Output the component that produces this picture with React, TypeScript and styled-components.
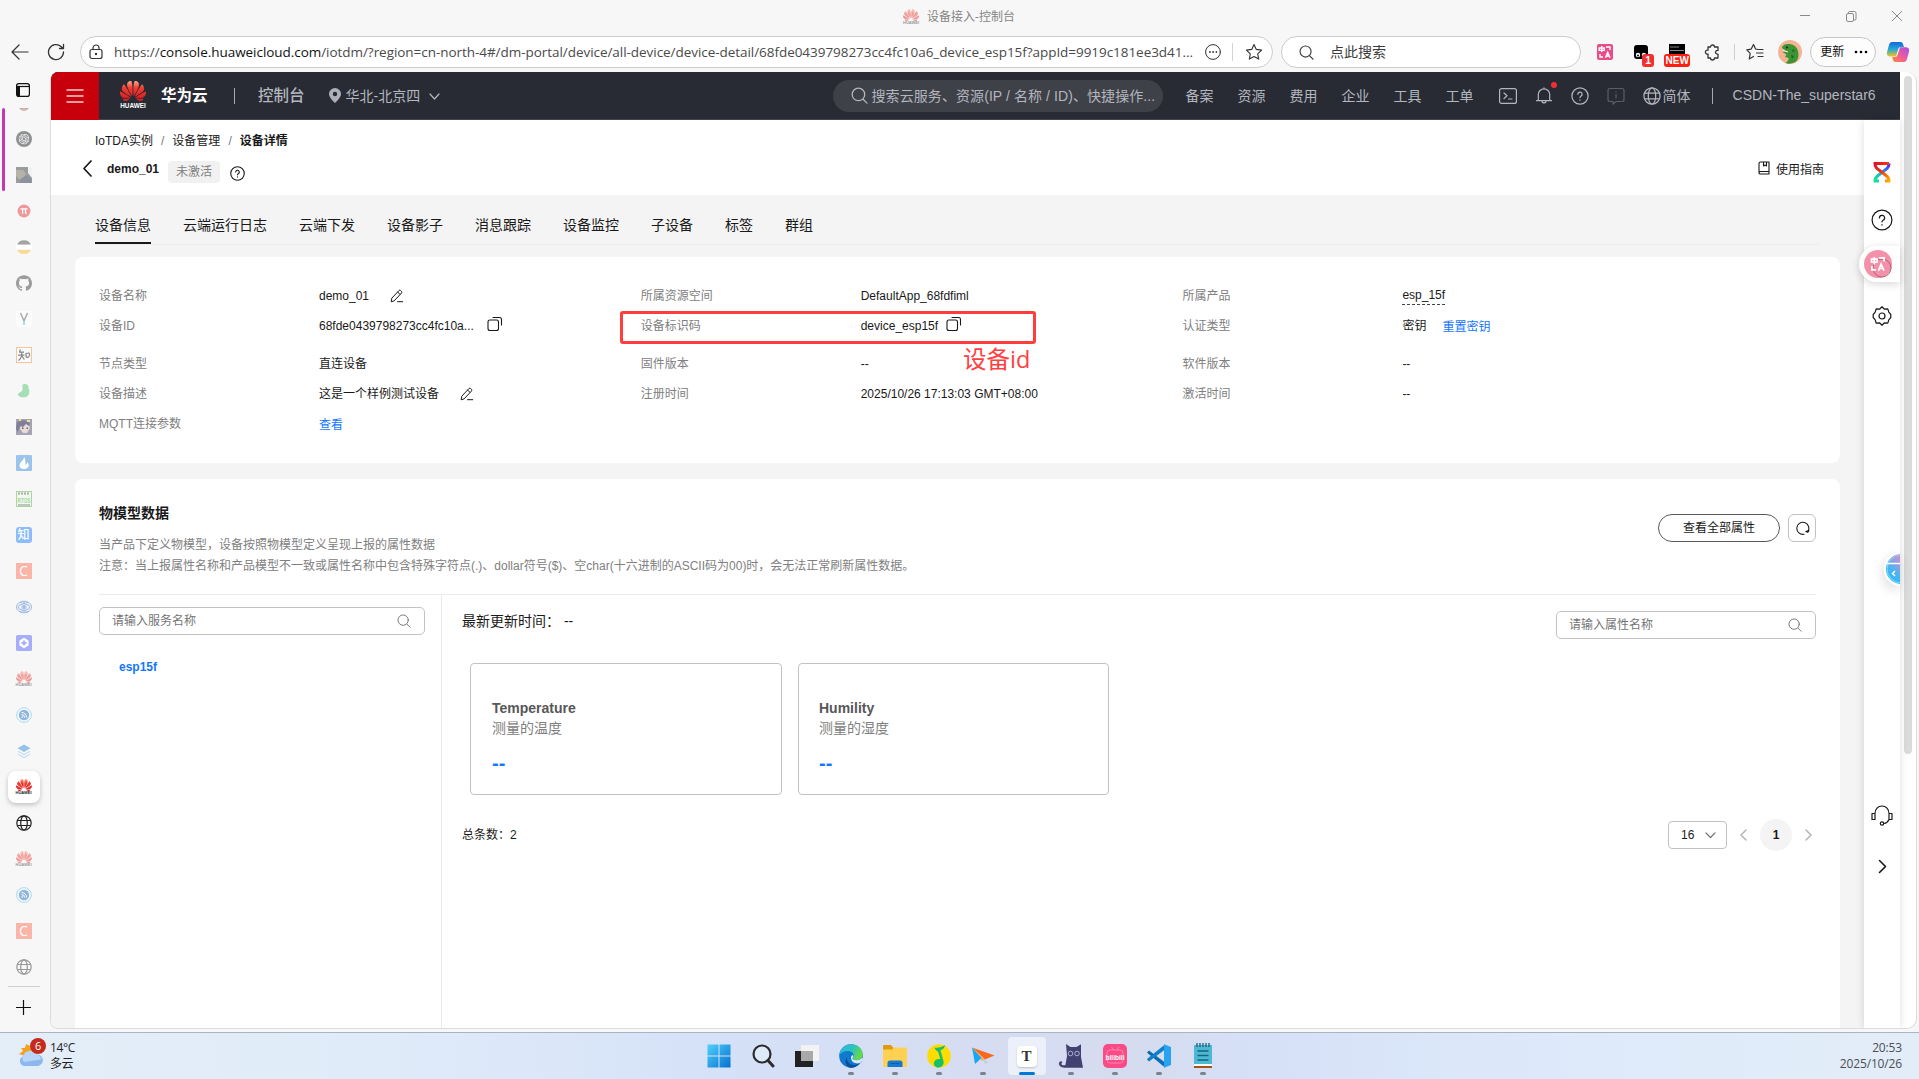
import React from 'react';
import styled, { createGlobalStyle } from 'styled-components';
import { SiHuawei, SiGithub, SiOpenai } from 'react-icons/si';

const web = '"Liberation Sans", Arial, "Noto Sans CJK SC", sans-serif';
const ui = '"Open Sans", "Noto Sans", "Noto Sans CJK SC", sans-serif';

const Global = createGlobalStyle`
  *, *::before, *::after { box-sizing: border-box; }
  html, body { margin: 0; padding: 0; overflow: hidden; background: #f7f7f7; }
  svg { display: block; flex: none; }
`;

/* ---------- window ---------- */

const Window = styled.div`
  display: flex;
  flex-direction: column;
  width: 1919px;
  height: 1079px;
  background: #f7f7f7;
  font-family: ${ui};
  font-size: 12px;
  color: #191919;
  white-space: nowrap;
`;

const TitleBar = styled.div`
  display: grid;
  grid-template-columns: 1fr auto 1fr;
  align-items: center;
  height: 32px;
  color: #868686;
`;

const TitleText = styled.div`
  grid-column: 2;
  display: flex;
  align-items: center;
  gap: 8px;
  margin-right: 1px;
  padding-top: 1px;
  line-height: 18px;
`;

const WindowControls = styled.div`
  display: flex;
  justify-content: flex-end;
  gap: 30px;
  padding-right: 14px;
`;

const Toolbar = styled.div`
  display: flex;
  align-items: center;
  height: 40px;
  color: #333;
`;

const ToolIcon = styled.span<{ $w: number }>`
  display: flex;
  justify-content: center;
  align-items: center;
  flex: none;
  width: ${(p) => p.$w}px;
  height: 32px;
`;

const AddressBar = styled.div`
  display: flex;
  align-items: center;
  width: 1193px;
  height: 32px;
  border: 1px solid #cdcdcd;
  border-radius: 16px;
  background: #fff;
  padding: 0 0 0 7px;
`;

const Url = styled.div`
  flex: none;
  width: 1082px;
  margin-left: 10px;
  font-size: 13.5px;
  letter-spacing: -0.048px;
  line-height: 20px;
  color: #4a4a4a;
  b { font-weight: 400; color: #111; }
`;

const VLine = styled.span<{ $h: number; $c: string }>`
  width: 1px;
  height: ${(p) => p.$h}px;
  background: ${(p) => p.$c};
  flex: none;
`;

const QuickSearch = styled.div`
  display: flex;
  align-items: center;
  gap: 16px;
  width: 301px;
  height: 32px;
  margin: 0 9px 0 8px;
  padding-left: 17px;
  border: 1px solid #cdcdcd;
  border-radius: 16px;
  background: #fff;
  font-size: 14px;
  line-height: 20px;
  color: #3b3b3b;
`;

const BadgeHost = styled.span`
  position: relative;
  display: flex;
  width: 16px;
  height: 16px;
`;

const Badge = styled.span<{ $wide?: boolean }>`
  position: absolute;
  top: 10px;
  left: ${(p) => (p.$wide ? -5 : 9)}px;
  width: ${(p) => (p.$wide ? 26 : 12)}px;
  height: 13px;
  border-radius: 3px;
  background: ${(p) => (p.$wide ? '#ff1e0f' : '#f23030')};
  color: #fff;
  font: bold ${(p) => (p.$wide ? 10 : 10.5)}px/13px ${web};
  text-align: center;
`;

const UpdatePill = styled.div`
  display: flex;
  align-items: center;
  gap: 10px;
  width: 66px;
  height: 30px;
  padding-left: 9px;
  border: 1px solid #c6c6c6;
  border-radius: 15px;
  background: #fdfdfd;
  color: #111;
  line-height: 18px;
`;

const Main = styled.div`
  display: flex;
  flex: none;
  height: 960px;
`;

/* ---------- vertical tabs ---------- */

const TabRail = styled.div`
  display: flex;
  flex-direction: column;
  align-items: center;
  width: 50px;
  padding-right: 3px;
`;

const TabToggle = styled.div`
  display: flex;
  align-items: center;
  height: 36px;
  padding-right: 1px;
`;

const TabList = styled.div`
  position: relative;
  display: flex;
  flex: none;
  flex-direction: column;
  align-items: center;
  width: 47px;
  height: 924px;
`;

const GroupMark = styled.div`
  position: absolute;
  left: 2px;
  top: 0;
  width: 3px;
  height: 83px;
  border-radius: 2px;
  background: #c239b3;
`;

const CutTab = styled.div`
  flex: none;
  height: 13px;
`;

const TabCell = styled.div`
  display: flex;
  flex: none;
  align-items: center;
  justify-content: center;
  width: 32px;
  height: 36px;
`;

const TabStack = styled.div`
  display: flex;
  flex: none;
  flex-direction: column;
  padding-top: 0;
`;

const ActiveTile = styled.div`
  display: flex;
  flex: none;
  align-items: center;
  justify-content: center;
  width: 32px;
  height: 32px;
  border-radius: 8px;
  background: #fff;
  box-shadow: 0 2px 5px rgba(0, 0, 0, 0.22);
`;

const LetterTile = styled.div<{ $bg: string; $fg?: string; $line?: string; $size?: number; $r?: number }>`
  width: 16px;
  height: 16px;
  border-radius: ${(p) => p.$r ?? 0}px;
  border: ${(p) => (p.$line ? `1px solid ${p.$line}` : '0')};
  background: ${(p) => p.$bg};
  color: ${(p) => p.$fg ?? '#fff'};
  font: 500 ${(p) => p.$size ?? 14}px/${(p) => (p.$line ? 14 : 16)}px "Open Sans", "Noto Sans CJK SC", sans-serif;
  text-align: center;
`;

const LogoStack = styled.span<{ $faded?: boolean }>`
  display: flex;
  flex-direction: column;
  align-items: center;
  width: 16px;
  opacity: ${(p) => (p.$faded ? 0.45 : 1)};
  svg { fill: url(#petal); }
  small {
    width: 16px;
    height: 4px;
    font: bold 4px/4px ${web};
    text-align: center;
    color: #222;
  }
`;

const RailDivider = styled.div`
  flex: none;
  width: 32px;
  height: 1px;
  margin-top: 1px;
  background: #cfcfcf;
`;

const NewTab = styled.div`
  flex: none;
  margin-top: 13px;
`;

/* ---------- page frame ---------- */

const Panel = styled.div`
  display: flex;
  width: 1867px;
  height: 957px;
  border: 1px solid #dcdcdc;
  border-top: 0;
  border-radius: 8px 10px 10px 8px;
  background: #fff;
  overflow: hidden;
`;

const Page = styled.div`
  display: flex;
  flex-direction: column;
  width: 1849px;
  font-family: ${web};
`;

const ScrollTrack = styled.div`
  flex: 1;
  padding: 4px 4px 0 4px;
`;

const ScrollThumb = styled.div`
  width: 8px;
  height: 678px;
  border-radius: 4px;
  background: #dbdbdb;
`;

const CloudHeader = styled.div`
  display: flex;
  flex: none;
  align-items: center;
  height: 48px;
  background: #282b33;
  border-bottom: 1px solid #43454c;
  font-size: 14px;
  line-height: 20px;
  color: #b3b6be;
`;

const MenuButton = styled.div`
  display: flex;
  align-items: center;
  justify-content: center;
  width: 48px;
  height: 48px;
  background: #c7000b;
`;

const BrandLogo = styled.div`
  display: flex;
  flex-direction: column;
  align-items: center;
  gap: 1px;
  width: 28px;
  margin-left: 20px;
  svg { fill: url(#petal); }
  span { font: bold 6.4px/8px ${web}; color: #fff; }
`;

const BrandName = styled.b`
  width: 48px;
  margin: 0 25px 0 14px;
  font-size: 15.5px;
  color: #fff;
`;

const ConsoleName = styled.span`
  margin: 0 24px 0 23px;
  font-size: 15.5px;
  font-weight: 500;
`;

const Region = styled.div`
  display: flex;
  align-items: center;
  gap: 5px;
  width: 504px;
  > svg:last-child { margin: 2px 0 0 4px; }
`;

const CloudSearch = styled.div`
  display: flex;
  align-items: center;
  gap: 4px;
  width: 330px;
  height: 32px;
  padding-left: 18px;
  border-radius: 16px;
  background: #3f4148;
  letter-spacing: 0.08px;
`;

const CloudNav = styled.nav`
  display: flex;
  gap: 24px;
  margin: 0 25px 0 23px;
`;

const CloudTools = styled.div`
  display: flex;
  align-items: center;
  gap: 18px;
`;

const BellDot = styled.span`
  position: absolute;
  top: -5px;
  right: -4px;
  width: 6px;
  height: 6px;
  border-radius: 50%;
  background: #f23030;
`;

const BellHost = styled.span`
  position: relative;
`;

const Language = styled.div`
  display: flex;
  align-items: center;
  gap: 2px;
  margin-right: 21px;
`;

const Account = styled.span`
  margin: 0 0 2px 20px;
  letter-spacing: 0.04px;
`;

const Body = styled.div`
  display: flex;
  flex: 1;
  min-height: 0;
`;

const Content = styled.div`
  display: flex;
  flex-direction: column;
  width: 1813px;
  background: #f4f4f4;
`;

const PageHead = styled.div`
  flex: none;
  height: 75px;
  padding: 12px 40px 0 26px;
  background: #fff;
`;

const Crumbs = styled.div`
  display: flex;
  gap: 8px;
  padding-left: 18px;
  line-height: 18px;
  i { font-style: normal; color: #777; }
`;

const TitleRow = styled.div`
  display: flex;
  align-items: flex-start;
  height: 36px;
  padding-top: 7px;
  > svg { margin: 3px 0 0 4.5px; }
  > b { margin: 3px 9px 0 15.5px; line-height: 18px; font-size: 12px; }
`;

const StatusTag = styled.span`
  width: 52px;
  height: 22px;
  margin: 4px 7px 0 0;
  border-radius: 4px;
  background: #f1f1f1;
  color: #808080;
  line-height: 22px;
  text-align: center;
`;

const Guide = styled.div`
  display: flex;
  align-items: center;
  gap: 6px;
  height: 18px;
  margin: 2px 0 0 auto;
`;

const HelpMark = styled.div`
  padding: 9px 0 0 3px;
`;

const Tabs = styled.div`
  display: flex;
  flex: none;
  gap: 32px;
  height: 50px;
  margin: 0 44px 12px 44px;
  border-bottom: 1px solid #ededed;
`;

const Tab = styled.div<{ $on?: boolean }>`
  height: 49px;
  padding-top: 19px;
  border-bottom: ${(p) => (p.$on ? '2px solid #191919' : '0')};
  font-size: 14px;
  line-height: 22px;
`;

const Card = styled.section<{ $grow?: boolean }>`
  position: relative;
  flex: ${(p) => (p.$grow ? '1' : 'none')};
  display: flex;
  flex-direction: ${(p) => (p.$grow ? 'column' : 'row')};
  width: 1765px;
  height: ${(p) => (p.$grow ? 'auto' : '206px')};
  margin: 0 0 ${(p) => (p.$grow ? 0 : 16)}px 24px;
  padding: 24px 24px 0 24px;
  border-radius: ${(p) => (p.$grow ? '8px 8px 0 0' : '8px')};
  background: #fff;
`;

const InfoColumn = styled.div`
  width: 541.7px;
`;

const InfoRow = styled.div<{ $tail?: boolean }>`
  display: grid;
  grid-template-columns: 220px 1fr;
  align-items: center;
  height: 30px;
  margin-bottom: ${(p) => (p.$tail ? 8 : 0)}px;
  line-height: 18px;
`;

const Label = styled.span`
  color: #808080;
`;

const Value = styled.span<{ $gap?: number }>`
  display: flex;
  align-items: center;
  gap: ${(p) => p.$gap ?? 0}px;
`;

const CopySlot = styled.span`
  margin-bottom: 4px;
`;

const Link = styled.a`
  color: #1476ff;
  padding-top: 1px;
`;

const DashedLink = styled.span`
  height: 18px;
  line-height: 17px;
  border-bottom: 1px dashed #444;
  margin-top: -1px;
`;

const RedFrame = styled.div`
  position: absolute;
  left: 545px;
  top: 54px;
  width: 416px;
  height: 33px;
  border: 3px solid #ff3d3d;
  border-radius: 3px;
`;

const RedNote = styled.div`
  position: absolute;
  left: 888px;
  top: 86px;
  font: 23.5px/32px ${ui};
  color: #ff4040;
`;

const ModelHead = styled.div`
  display: flex;
  justify-content: space-between;
  flex: none;
  height: 92px;
  border-bottom: 1px solid #ebebeb;
`;

const ModelText = styled.div`
  line-height: 21px;
  color: #808080;
  h3 { margin: 0 0 12px; font-size: 14px; line-height: 20px; color: #191919; }
  p { margin: 0; }
`;

const ModelActions = styled.div`
  display: flex;
  gap: 8px;
  padding-top: 11px;
`;

const OutlineButton = styled.div`
  width: 122px;
  height: 28px;
  border: 1px solid #595959;
  border-radius: 14px;
  line-height: 26px;
  text-align: center;
`;

const SquareButton = styled.div`
  display: flex;
  align-items: center;
  justify-content: center;
  width: 28px;
  height: 28px;
  border: 1px solid #c2c2c2;
  border-radius: 6px;
`;

const ModelBody = styled.div`
  display: flex;
  flex: 1;
`;

const ServicePane = styled.div`
  width: 343px;
  padding: 12px 16px 0 0;
  border-right: 1px solid #ebebeb;
`;

const SearchField = styled.div<{ $w: number }>`
  display: flex;
  align-items: center;
  justify-content: space-between;
  width: ${(p) => p.$w}px;
  height: 28px;
  padding: 0 13px 0 12px;
  border: 1px solid #c2c2c2;
  border-radius: 5px;
  font-size: 12px;
  line-height: 26px;
  color: #757575;
`;

const ServiceName = styled.div`
  margin: 23px 0 0 20px;
  line-height: 18px;
  font-weight: bold;
  color: #1476ff;
`;

const PropertyPane = styled.div`
  flex: 1;
  padding: 16px 0 0 20px;
`;

const PropertyBar = styled.div`
  display: flex;
  justify-content: space-between;
  align-items: flex-start;
  height: 52px;
  font-size: 14px;
  line-height: 22px;
  > span { margin-top: -1px; }
`;

const PropertyGrid = styled.div`
  display: flex;
  gap: 16px;
  padding-left: 8px;
`;

const PropertyCard = styled.div<{ $w: number; $pad: number }>`
  width: ${(p) => p.$w}px;
  height: 132px;
  padding: 34px 0 0 ${(p) => p.$pad}px;
  border: 1px solid #c2c2c2;
  border-radius: 4px;
  font-size: 14px;
  line-height: 20px;
  color: #808080;
  b { display: block; color: #575757; }
  strong { display: block; margin-top: 15px; font-size: 20px; color: #1476ff; }
`;

const Pager = styled.div`
  display: flex;
  align-items: center;
  height: 32px;
  margin-top: 24px;
  > span { margin-top: -3px; }
`;

const PagerControls = styled.div`
  display: flex;
  align-items: center;
  margin-left: auto;
  padding-right: 4px;
  gap: 13px;
`;

const PageSize = styled.div`
  display: flex;
  align-items: center;
  justify-content: space-between;
  width: 59px;
  height: 28px;
  padding: 0 10px 0 12px;
  border: 1px solid #c2c2c2;
  border-radius: 4px;
`;

const PageNumber = styled.b`
  width: 32px;
  height: 32px;
  border-radius: 50%;
  background: #f4f4f4;
  line-height: 32px;
  text-align: center;
`;

/* ---------- right rail ---------- */

const HelpRail = styled.aside`
  position: relative;
  display: flex;
  flex-direction: column;
  align-items: center;
  width: 36px;
  padding-top: 41px;
  background: #fff;
  box-shadow: 0 0 8px rgba(0, 0, 0, 0.14);
`;

const TranslateFloat = styled.div`
  position: absolute;
  left: -5px;
  top: 126px;
  display: flex;
  align-items: center;
  width: 41px;
  height: 36px;
  padding-left: 5px;
  border-radius: 18px 0 0 18px;
  background: #fff;
  box-shadow: 0 2px 8px rgba(0, 0, 0, 0.16);
`;

const RobotFloat = styled.div`
  position: absolute;
  right: 0;
  top: 432px;
  width: 16px;
  height: 34px;
  border-radius: 17px 0 0 17px;
  box-shadow: -1px 4px 12px rgba(0, 0, 0, 0.14);
  overflow: hidden;
`;

const RailIcon = styled.div<{ $mt: number }>`
  margin-top: ${(p) => p.$mt}px;
`;

/* ---------- taskbar ---------- */

const Taskbar = styled.footer`
  display: grid;
  grid-template-columns: 1fr auto 1fr;
  height: 47px;
  border-top: 1px solid #a9b3c4;
  background: linear-gradient(90deg, #e3eef8 0%, #e0ebf9 20%, #d5e1f8 38%, #d6ddf2 50%, #d5dcf0 60%, #d6e1f8 66%, #deeafa 82%, #e2edf8 100%);
`;

const Weather = styled.div`
  display: flex;
  gap: 7px;
  padding: 7px 0 0 19px;
  line-height: 16px;
  letter-spacing: -0.4px;
  color: #222;
`;

const WeatherIcon = styled.span`
  position: relative;
  width: 24px;
  height: 30px;
`;

const WeatherBadge = styled.span`
  position: absolute;
  left: 11px;
  top: -2px;
  width: 16px;
  height: 16px;
  border-radius: 50%;
  background: #c42b1c;
  color: #fff;
  font-size: 11px;
  line-height: 16px;
  text-align: center;
`;

const Apps = styled.div`
  display: flex;
  gap: 6px;
  padding: 4px 0 0 2px;
`;

const TaskApp = styled.div<{ $on?: boolean }>`
  display: flex;
  flex-direction: column;
  align-items: center;
  justify-content: flex-end;
  width: 38px;
  height: 38px;
  border-radius: 4px;
  background: ${(p) => (p.$on ? 'rgba(255,255,255,0.55)' : 'transparent')};
`;

const AppMark = styled.span<{ $state: 'none' | 'open' | 'on' }>`
  width: ${(p) => (p.$state === 'on' ? 16 : 6)}px;
  height: 3px;
  margin-top: 4px;
  border-radius: 2px;
  background: ${(p) => (p.$state === 'on' ? '#0078d4' : p.$state === 'open' ? '#7c828e' : 'transparent')};
`;

const TyporaTile = styled.span`
  width: 20px;
  height: 21px;
  margin-bottom: 1px;
  border-radius: 4px;
  background: #fff;
  box-shadow: 0 1px 2px rgba(0, 0, 0, 0.2);
  font: bold 15px/21px "Liberation Serif", serif;
  color: #333;
  text-align: center;
`;

const Clock = styled.div`
  padding: 7px 17px 0 0;
  line-height: 16px;
  text-align: right;
  color: #4b4f55;
  letter-spacing: -0.15px;
`;

/* ---------- icons ---------- */

const stroke = (w = 1.2) => ({ fill: 'none', stroke: 'currentColor', strokeWidth: w, strokeLinecap: 'round' as const, strokeLinejoin: 'round' as const });

const Magnifier = ({ s = 16, c = 'currentColor', w = 1.2 }) => (
  <svg width={s} height={s} viewBox="0 0 16 16" fill="none" stroke={c} strokeWidth={w} strokeLinecap="round">
    <circle cx="7" cy="7" r="5.9" />
    <path d="M11.4 11.6 15 15.2" />
  </svg>
);

const HelpIcon = ({ s = 16, w = 1.2 }) => (
  <svg width={s} height={s} viewBox="0 0 16 16" {...stroke(w)}>
    <circle cx="8" cy="8" r="7.2" />
    <path d="M6.1 6.5a1.9 1.9 0 1 1 2.7 1.7c-.6.3-.8.6-.8 1.2" />
    <path d="M8 11.4v.3" />
  </svg>
);

const Globe = ({ s = 16, w = 1.2, c = 'currentColor' }) => (
  <svg width={s} height={s} viewBox="0 0 16 16" fill="none" stroke={c} strokeWidth={w}>
    <circle cx="8" cy="8" r="7.2" />
    <ellipse cx="8" cy="8" rx="3.3" ry="7.2" />
    <path d="M1.3 5.5h13.4M1.3 10.5h13.4" />
  </svg>
);

const EditIcon = () => (
  <svg width="14" height="14" viewBox="0 0 14 14" {...stroke(1)}>
    <path d="M1.2 12.4 1.8 9.2 9 1.5q.8-.8 1.6 0l.9.9q.8.8 0 1.6L4.4 11.6Z" />
    <path d="M7.6 3 10 5.4M7.5 12.7h5.2" />
  </svg>
);

const CopyIcon = () => (
  <CopySlot>
    <svg width="16" height="16" viewBox="0 0 16 16" {...stroke(1.1)}>
      <rect x="1" y="4" width="10.5" height="10.5" rx="2" />
      <path d="M6 1.500h6.500a2 2 0 0 1 2 2v5.500" />
    </svg>
  </CopySlot>
);

const Chevron = ({ d, w = 10, h = 6, sw = 1.2, c = 'currentColor' }: { d: string; w?: number; h?: number; sw?: number; c?: string }) => (
  <svg width={w} height={h} viewBox={`0 0 ${w} ${h}`} fill="none" stroke={c} strokeWidth={sw} strokeLinecap="round" strokeLinejoin="round">
    <path d={d} />
  </svg>
);

const HuaweiPetals = ({ w, h }: { w: number; h: number }) => (
  <SiHuawei viewBox="0 3.2 24 17.6" preserveAspectRatio="none" width={w} height={h} style={{ width: w, height: h }} />
);

const HuaweiMark = ({ faded }: { faded?: boolean }) => (
  <LogoStack $faded={faded}>
    <HuaweiPetals w={16} h={12} />
    <small>HUAWEI</small>
  </LogoStack>
);

const TranslateGlyph = ({ s }: { s: number }) => (
  <svg width={s} height={s} viewBox="0 0 16 16" fill="none" stroke="#fff" strokeWidth="1.5">
    <path d="M2.2 3.6h5v2.6h-5zM4.7 1.8v6.6M9 2.6h4.4v3.2M2.6 9.8v3.4h3.6M8.4 14l2.4-6 2.5 6M9.2 12h3.2" />
  </svg>
);

const Rss = () => (
  <svg width="16" height="16" viewBox="0 0 16 16">
    <circle cx="8" cy="8" r="7.4" fill="none" stroke="#a6dcf5" />
    <circle cx="8" cy="8" r="5.2" fill="#8fb6df" />
    <g fill="none" stroke="#fff" strokeWidth="1"><path d="M5.6 7.6a3 3 0 0 1 3 3M5.6 5.5a5 5 0 0 1 5 5" /></g>
    <circle cx="6.2" cy="10" r=".8" fill="#fff" />
  </svg>
);

const sideTabs: React.ReactNode[] = [
  <SiOpenai size={16} color="#fff" style={{ background: '#8f9193', borderRadius: 8, padding: 2.5 }} />,
  <svg width="16" height="16" viewBox="0 0 16 16"><path fill="#9b9ca0" d="M0 0h16v16H0z" /><path fill="#b5b3a6" d="M0 3h7l3 4-2 5H3L0 9z" /><path fill="#8d929c" d="M5 12l5-4 5 4 1 4H4z" /><path fill="#f2f2f2" d="M12 0h4v11l-4-5z" /></svg>,
  <svg width="14" height="14" viewBox="0 0 14 14"><circle cx="7" cy="7" r="6.5" fill="#f0999b" /><path d="M3.5 4.8h7M5.6 5v4.8M8.5 5v3.6q0 1 1.2 1" fill="none" stroke="#fff" strokeWidth="1.3" /></svg>,
  <svg width="16" height="16" viewBox="0 0 16 16"><path fill="#a3a3a3" d="M1.3 5.5a7 6 0 0 1 13.4 0z" /><path fill="#fff" d="M0 6h16v4H0z" /><path fill="#fbd992" d="M1.3 11a7 5.5 0 0 0 13.4 0z" /></svg>,
  <SiGithub size={16} color="#9b9b9b" />,
  <svg width="16" height="16" viewBox="0 0 16 16"><path fill="#fbfbfb" d="M0 0h16v16H0z" /><path d="M4.5 2 8 10l3.5-8" fill="none" stroke="#aaa" strokeWidth="1.5" /><path d="M8 10.5v3.5" stroke="#a5dcef" strokeWidth="2" /></svg>,
  <svg width="16" height="16" viewBox="0 0 16 16" fill="none"><rect x=".5" y=".5" width="15" height="15" fill="#fafafa" stroke="#f7c49e" /><path d="M4.5 2.500 3.500 5M3 5.200h5M2 8.200h6.500M5.700 5v3.500Q5 12 2.500 13.500M6 9l2.300 3.500M10 6.500q4-1.500 3.500 1.500c-.3 2.500-2.800 3.200-3.400 1.500z" stroke="#868686" strokeWidth="1.2" /></svg>,
  <svg width="16" height="16" viewBox="0 0 16 16"><path fill="#a5e0b4" d="M7 1.500c3-1.200 6 .5 5.500 3.500C14.500 9 13 14 8.500 14.300 5 14.500 2 13.500 2 11.500 2 9.500 5.500 9.500 6.500 7 7.200 5 5.500 2.500 7 1.500z" /></svg>,
  <svg width="16" height="16" viewBox="0 0 16 16"><path fill="#a4a4b2" d="M0 0h16v16H0z" /><path fill="#eadbd8" d="M5 5l7 0 2 4-3 5H7L4 10z" /><path fill="#7f7f98" d="M1 3l7-2 6 3-1 3-3-2-3 3-3-1-2 6-2-3z" /><path fill="#f3d9a8" d="M3 0h2v2H3zM11 1h3v2h-3z" /><path fill="#666" d="M6 8.500h1.500V10H6zM10.500 8.500H12V10h-1.500z" /></svg>,
  <svg width="16" height="16" viewBox="0 0 16 16"><rect width="16" height="16" rx="1" fill="#9cc3ec" /><path d="M8 2c.5 3-4.500 5-4.500 8.500C3.500 13 6 14 8 14s4.800-1 4.800-3.700c0-1.600-1-2.300-1.200-3.300-.6 1.500-1.200 2.500-2.200 3C9.500 8 9.800 4 8 2z" fill="#fff" /></svg>,
  <svg width="16" height="16" viewBox="0 0 16 16"><rect x=".5" y=".5" width="15" height="15" fill="#f1f9ee" stroke="#aad6a2" /><path d="M2 2.500h12" stroke="#a9a9a9" strokeWidth="2" strokeDasharray="2 1" /><path d="M2 14h12" stroke="#b5b5b5" strokeWidth="1.6" /><text x="8" y="11.6" textAnchor="middle" fontFamily="Liberation Sans, sans-serif" fontWeight="bold" fontSize="8" textLength="13" lengthAdjust="spacingAndGlyphs" fill="#a3d69a">RTOS</text></svg>,
  <LetterTile $bg="#8bbcfb" $size={12} $r={3}>知</LetterTile>,
  <LetterTile $bg="#fbb4a8" $size={14}>C</LetterTile>,
  <svg width="16" height="16" viewBox="0 0 16 16" fill="none" stroke="#9db8e6" strokeWidth="1"><ellipse cx="8" cy="8" rx="7.5" ry="5.8" /><rect x="2.5" y="5.5" width="5" height="5" rx="2.5" /><rect x="8.5" y="5.5" width="5" height="5" rx="2.5" /><path d="M5 8h6M8 2.500v11M4 3.500q4 2 8 0M4 12.500q4-2 8 0" /></svg>,
  <svg width="16" height="16" viewBox="0 0 16 16"><rect width="16" height="16" rx="1.5" fill="#a8adfa" /><path d="M8 2.800 12.500 5.400v5.200L8 13.200 3.500 10.600V5.400z" fill="#fff" /><path d="M8 5.500v5M5.500 8h5" stroke="#a8adfa" strokeWidth="1.8" /></svg>,
  <HuaweiMark faded />,
  <Rss />,
  <svg width="14" height="15" viewBox="0 0 14 15"><path d="M7 .5 13.500 4.200 7 8 .5 4.200z" fill="#97c1e8" /><path d="M1 7.200 7 10.600l6-3.400M1 10.200l6 3.400 6-3.400" fill="none" stroke="#c4def2" strokeWidth="1.2" /></svg>,
  <ActiveTile><HuaweiMark /></ActiveTile>,
  <Globe c="#222" />,
  <HuaweiMark faded />,
  <Rss />,
  <LetterTile $bg="#fbb4a8" $size={14}>C</LetterTile>,
  <Globe c="#999" />,
];

const taskApps: { icon: React.ReactNode; state: 'none' | 'open' | 'on' }[] = [
  { state: 'none', icon: <svg width="24" height="24" viewBox="0 0 24 24"><defs><linearGradient id="win" x1="0" y1="0" x2="1" y2="1"><stop offset="0" stopColor="#4fd0fb" /><stop offset="1" stopColor="#0670cf" /></linearGradient></defs><path fill="url(#win)" d="M.5.5h11v11H.5zM12.500.5h11v11h-11zM.5 12.500h11v11H.5zM12.500 12.500h11v11h-11z" /></svg> },
  { state: 'none', icon: <svg width="24" height="24" viewBox="0 0 24 24" fill="none" stroke="#2b2b2b"><circle cx="11" cy="10" r="8.5" strokeWidth="2.2" fill="#dfeaf8" /><path d="m17 16.500 5 5.500" strokeWidth="3" strokeLinecap="round" /></svg> },
  { state: 'none', icon: <svg width="24" height="24" viewBox="0 0 24 24"><path fill="#222" d="M0 7h18v16H0z" /><path fill="#f3f3f3" d="M6 1h18v16H6z" /><path fill="#a9a9a9" d="M6 7h12v10H6z" /></svg> },
  { state: 'open', icon: <svg width="24" height="24" viewBox="0 0 24 24"><defs><linearGradient id="edge" x1="0" y1="0" x2="1" y2=".4"><stop offset="0" stopColor="#2bb4e9" /><stop offset=".6" stopColor="#2fc4b8" /><stop offset="1" stopColor="#66d84b" /></linearGradient></defs><circle cx="12" cy="12" r="11.8" fill="#0f78cf" /><path fill="url(#edge)" d="M.3 11C1 4.500 6 .2 12 .2c7 0 11.800 4.800 11.800 10 0 3.800-3 6-6.300 6-2.500 0-4-.8-4-1.700 0-.8 1.200-1.200 1.200-3.200 0-2.300-2.500-4.300-6-4.300-4 0-7 2-8.400 4z" /><path fill="#dce6f8" d="M13.500 14.500c0 .9 1.500 1.700 4 1.700 2 0 4-.7 5.300-2.200.9 0 1.200 0 .8 1.500-.8 1.500-1.600 2.800-2.600 3.600-3 .9-8.500.2-9-5-.1-1.500.5-2.700 1.500-3.100 1.700 1.500.2 2.500 0 3.500z" /><path fill="#0c4f97" d="M8 13c-.5 5 3.500 8.800 8.500 7.900 1.500-.3 3-.9 4.300-1.800-2 3-5.300 4.700-8.800 4.700C8 23.500 4.500 18 8 13z" /></svg> },
  { state: 'open', icon: <svg width="24" height="24" viewBox="0 0 24 24"><path fill="#dd9b10" d="M0 2q0-1 1-1h7l2.500 3H24v5H0z" /><path fill="#ffd152" d="M0 5.500h9l2-2h12q1 0 1 1V22q0 1-1 1H1q-1 0-1-1z" /><path fill="#1379d1" d="M4.500 23v-4q0-2.500 2.500-2.500h10q2.500 0 2.500 2.500v4z" /><path fill="#0b5ea8" d="M7.500 19h9v1h-9z" /></svg> },
  { state: 'open', icon: <svg width="24" height="24" viewBox="0 0 24 24"><circle cx="12" cy="12" r="11.8" fill="#ffdc00" /><path fill="#13c06c" d="M7.500 3.500c3 .8 7 0 10.500-2.500-.3 2.500-1.500 4.500-4.500 5.300l3 11c.8 3.700-2 6.200-5 6.200-3.500 0-5-2.500-4.600-4.500.5-2.800 3.500-4.500 6.500-3.700L11 7.500C9.500 7 8 5.500 7.500 3.500z" /></svg> },
  { state: 'open', icon: <svg width="24" height="24" viewBox="0 0 24 24"><path fill="#f9691d" d="M1 3.500 23.500 11.500 14 15.500z" /><path fill="#ffae5e" d="M1 3.500 14 15.500 11 17z" /><path fill="#17a8f2" d="M1 3.500 10.500 14 4 20z" /><path fill="#c5cbd6" d="M12 15.500 15 20.500l1.500-3z" /></svg> },
  { state: 'on', icon: <TyporaTile>T</TyporaTile> },
  { state: 'open', icon: <svg width="24" height="24" viewBox="0 0 24 24"><path fill="#414270" d="M7 0l4.500 3h6L22 .3V13l2 10.700H7c-4 0-7-1-7-4.200 0-2 2-2.700 3-1.800 1 1-.5 2-.9 1.800.5 2 2.500 1.900 4.300 1.500L8 12z" /><g fill="none" stroke="#c6c8e8" strokeWidth=".8"><circle cx="11.5" cy="9.5" r="2.3" /><circle cx="18" cy="9.5" r="2.3" /></g></svg> },
  { state: 'open', icon: <svg width="24" height="24" viewBox="0 0 24 24"><rect width="24" height="24" rx="5" fill="#fb4b86" /><path d="M8.500 3 11 6M16 3l-2.500 3" stroke="#ff86ae" /><rect x="4" y="6" width="16" height="13" rx="3" fill="none" stroke="#ff86ae" /><text x="12" y="15.5" fontFamily="Liberation Sans, sans-serif" fontSize="8" fontWeight="bold" fill="#fff" textAnchor="middle" textLength="19" lengthAdjust="spacingAndGlyphs">bilibili</text></svg> },
  { state: 'open', icon: <svg width="24" height="24" viewBox="0 0 24 24"><path fill="#0a6cb5" d="M0 8.500 2 6.500 18 18.500v5L1 9.500z" /><path fill="#1180cb" d="M0 15.500l2 2L18 5.500v-5L.5 14.500z" /><path fill="#27a3f0" d="M17 .3 24 3v18l-7 2.700z" /></svg> },
  { state: 'open', icon: <svg width="20" height="25" viewBox="0 0 20 25"><path fill="#4cb9d2" d="M1 2h18v20H1z" /><path fill="#fff" d="M1 21h18v2H1z" /><path fill="#a3541b" d="M1 23h18v2H1z" /><path d="M4 0v4M7 0v4M10 0v4M13 0v4M16 0v4" stroke="#1d5d7c" strokeWidth="1.3" /><path d="M4.500 8h11M4.500 12.500h11M4.500 17h11" stroke="#15637f" strokeWidth="1.6" /></svg> },
];

const navItems = ['备案', '资源', '费用', '企业', '工具', '工单'];
const tabs = ['设备信息', '云端运行日志', '云端下发', '设备影子', '消息跟踪', '设备监控', '子设备', '标签', '群组'];

type Field = { label: string; value: React.ReactNode; gap?: number };
const columns: Field[][] = [
  [
    { label: '设备名称', value: <>demo_01<EditIcon /></>, gap: 21 },
    { label: '设备ID', value: <>68fde0439798273cc4fc10a...<CopyIcon /></>, gap: 13 },
    { label: '节点类型', value: '直连设备' },
    { label: '设备描述', value: <>这是一个样例测试设备<EditIcon /></>, gap: 21 },
    { label: 'MQTT连接参数', value: <Link>查看</Link> },
  ],
  [
    { label: '所属资源空间', value: 'DefaultApp_68fdfiml' },
    { label: '设备标识码', value: <>device_esp15f<CopyIcon /></>, gap: 8 },
    { label: '固件版本', value: '--' },
    { label: '注册时间', value: '2025/10/26 17:13:03 GMT+08:00' },
  ],
  [
    { label: '所属产品', value: <DashedLink>esp_15f</DashedLink> },
    { label: '认证类型', value: <>密钥<Link>重置密钥</Link></>, gap: 16 },
    { label: '软件版本', value: '--' },
    { label: '激活时间', value: '--' },
  ],
];

const properties = [
  { name: 'Temperature', desc: '测量的温度', w: 312, pad: 21 },
  { name: 'Humility', desc: '测量的湿度', w: 311, pad: 20 },
];

export default function App() {
  return (
    <Window>
      <Global />
      <TitleBar>
        <TitleText><HuaweiMark faded />设备接入-控制台</TitleText>
        <WindowControls>
          <svg width="16" height="16" viewBox="0 0 16 16" stroke="#8a8a8a"><path d="M3 7.500h10" /></svg>
          <svg width="16" height="16" viewBox="0 0 16 16" fill="none" stroke="#8a8a8a"><rect x="3.5" y="5.5" width="7" height="8" rx="1.5" /><path d="M5.500 5V4.500q0-1 1-1h5q1.500 0 1.500 1.500v6q0 1-1 1h-1" /></svg>
          <svg width="16" height="16" viewBox="0 0 16 16" stroke="#8a8a8a"><path d="m3 3 10 10M13 3 3 13" /></svg>
        </WindowControls>
      </TitleBar>

      <Toolbar>
        <ToolIcon $w={40}><svg width="18" height="16" viewBox="0 0 18 16" {...stroke(1.2)}><path d="M1 8h16M8 1 1 8l7 7" /></svg></ToolIcon>
        <ToolIcon $w={32}><svg width="18" height="18" viewBox="0 0 18 18" {...stroke(1.3)}><path d="M16.500 9A7.500 7.500 0 1 1 14 3.500l2 2M16.500 1.500v4h-4" /></svg></ToolIcon>
        <ToolIcon $w={8} />
        <AddressBar>
          <svg width="16" height="16" viewBox="0 0 16 16" {...stroke(1.2)}><rect x="2" y="5.5" width="12" height="9" rx="2" /><path d="M5 5.500V4a3 3 0 0 1 6 0v1.500" /><circle cx="8" cy="10" r=".6" fill="currentColor" /></svg>
          <Url>https://<b>console.huaweicloud.com</b>/iotdm/?region=cn-north-4#/dm-portal/device/all-device/device-detail/68fde0439798273cc4fc10a6_device_esp15f?appId=9919c181ee3d41...</Url>
          <ToolIcon $w={34}><svg width="16" height="16" viewBox="0 0 16 16" {...stroke(1)}><circle cx="8" cy="8" r="7.4" /><g fill="currentColor"><circle cx="4.8" cy="8" r=".4" /><circle cx="8" cy="8" r=".4" /><circle cx="11.2" cy="8" r=".4" /></g></svg></ToolIcon>
          <ToolIcon $w={2} />
          <VLine $h={18} $c="#d4d4d4" />
          <ToolIcon $w={41}><svg width="18" height="18" viewBox="0 0 18 18" {...stroke(1.1)}><path d="m9 1.500 2.300 4.900 5.300.7-3.900 3.700 1 5.300L9 13.500l-4.700 2.600 1-5.300L1.400 7.100l5.300-.7z" /></svg></ToolIcon>
        </AddressBar>
        <QuickSearch><Magnifier s={15} />点此搜索</QuickSearch>
        <ToolIcon $w={30}><svg width="16" height="16" viewBox="0 0 16 16"><rect width="16" height="16" rx="2" fill="#ea4c89" /><path d="M2.200 4h5v2.400h-5zM4.700 2v6M9 3h4v3M3 10v3h3M8.500 13.800l2.200-5.500 2.300 5.500M9.200 12h3" fill="none" stroke="#fff" strokeWidth="1.4" /></svg></ToolIcon>
        <ToolIcon $w={42}><BadgeHost><svg width="16" height="16" viewBox="0 0 16 16"><rect x="1" y="1" width="14" height="14" rx="3" fill="#000" /><circle cx="5" cy="11" r="2.2" fill="#fff" /><circle cx="11" cy="11" r="2.2" fill="#fff" /><circle cx="5" cy="11.5" r="1" /></svg><Badge>1</Badge></BadgeHost></ToolIcon>
        <ToolIcon $w={30}><BadgeHost><svg width="16" height="16" viewBox="0 0 16 16"><path d="M0 0h16v10H0z" /><path d="M1 3h9M1 6.500h14" stroke="#aaa" strokeWidth=".8" /></svg><Badge $wide>NEW</Badge></BadgeHost></ToolIcon>
        <ToolIcon $w={42}><svg width="18" height="18" viewBox="0 0 18 18" {...stroke(1.3)}><path d="M4 4h2.500a2 2 0 1 1 4 0H14v3.500a1.900 1.900 0 1 0 0 3.600V15h-3.500a2 2 0 1 1-4 0H4v-4a2 2 0 1 1 0-3.800z" /></svg></ToolIcon>
        <VLine $h={16} $c="#cfcfcf" />
        <ToolIcon $w={39}><svg width="18" height="18" viewBox="0 0 18 18" {...stroke(1.2)}><path d="M12 6.500 9.600 6 7.500 1.500 5.200 6.100.8 6.900l3.400 3.500-.9 5.500 4.200-2.400M11.500 6.500H17M10.500 10H17M12 13.500h5" /></svg></ToolIcon>
        <ToolIcon $w={32}><svg width="24" height="24" viewBox="0 0 24 24"><circle cx="12" cy="12" r="12" fill="#f4b493" /><path fill="#3c9433" d="M4 8c0-3 4-4.500 8-4 4 .6 7 3 8 7 .8 3.500.8 7-1.500 10-3 2.600-8 3.300-11 2 2-1.500 3.500-3 3-5L7 17l1.500-2.500L4.500 12l3-1.500z" /><path stroke="#fff" strokeWidth="1" d="M5 10.500 10 12" /><circle cx="9" cy="7.5" r="1" fill="#123" /><path d="m15 9 2 2-3 1zM13 15l3 1-2 3z" fill="#1e6420" /></svg></ToolIcon>
        <ToolIcon $w={4} />
        <UpdatePill>更新<svg width="14" height="4" viewBox="0 0 14 4"><circle cx="2" cy="2" r="1.3" /><circle cx="7" cy="2" r="1.3" /><circle cx="12" cy="2" r="1.3" /></svg></UpdatePill>
        <ToolIcon $w={43}><svg width="22" height="20" viewBox="0 0 22 20"><defs><linearGradient id="cp1" x1="0" y1="0" x2="0" y2="1"><stop offset="0" stopColor="#1468d8" /><stop offset=".5" stopColor="#23a8d8" /><stop offset="1" stopColor="#f2c517" /></linearGradient><linearGradient id="cp2" x1="1" y1="0" x2="0" y2="1"><stop offset="0" stopColor="#a04ef0" /><stop offset=".5" stopColor="#ee5a9c" /><stop offset="1" stopColor="#fd8a3c" /></linearGradient></defs><path fill="url(#cp1)" d="M5 0h8.500c1.500 0 2.200 1 2.700 2.500l.8 2.500h-3c-1.500 0-2.300.7-2.800 2.300L9 14.500H3c-3 0-3.500-2.500-2.800-5L2 3C2.600 1 3.500 0 5 0z" /><path fill="url(#cp2)" d="M17 20H8.500c-1.500 0-2.200-1-2.700-2.500L5.200 15h2.600c1.500 0 2.300-.7 2.800-2.300L13 5.300h6c3 0 3.500 2.500 2.800 5L20 17c-.6 2-1.500 3-3 3z" /></svg></ToolIcon>
      </Toolbar>

      <Main>
        <TabRail>
          <TabToggle><svg width="14" height="14" viewBox="0 0 14 14" fill="none" stroke="#111" strokeWidth="1.2"><rect x=".6" y=".6" width="12.8" height="12.8" rx="2.2" /><path d="M.6 3.500h12.800" /><path d="M2.500 4v9" strokeWidth="3" /></svg></TabToggle>
          <TabList>
            <GroupMark />
            <CutTab><svg width="10" height="4" viewBox="0 0 10 4"><path d="M0 0h10Q8 3 5 3T0 0" fill="#b5b5b5" /><path d="M3 1h4v2H3z" fill="#e5b8ad" /></svg></CutTab>
            <TabStack>{sideTabs.map((icon, i) => <TabCell key={i}>{icon}</TabCell>)}</TabStack>
            <RailDivider />
            <NewTab><svg width="15" height="15" viewBox="0 0 15 15" stroke="#111" strokeWidth="1.2"><path d="M0 7.500h15M7.500 0v15" /></svg></NewTab>
          </TabList>
        </TabRail>

        <Panel>
          <Page>
            <CloudHeader>
              <MenuButton><svg width="18" height="14" viewBox="0 0 18 14" stroke="#f6cfd1" strokeWidth="1.6"><path d="M.5 1h17M.5 7h17M.5 13h17" /></svg></MenuButton>
              <BrandLogo>
                <svg width="0" height="0" style={{ position: 'absolute' }}><linearGradient id="petal" x1="0" y1="0" x2="0" y2="1"><stop offset="0" stopColor="#ffab8d" /><stop offset=".35" stopColor="#ee3b30" /><stop offset="1" stopColor="#dd1a1c" /></linearGradient></svg>
                <HuaweiPetals w={26} h={20} />
                <span>HUAWEI</span>
              </BrandLogo>
              <BrandName>华为云</BrandName>
              <VLine $h={16} $c="#a5a8b0" />
              <ConsoleName>控制台</ConsoleName>
              <Region>
                <svg width="12" height="15" viewBox="0 0 12 15" fill="#adb0b8"><path fillRule="evenodd" d="M6 0a6 6 0 0 1 6 5.800C12 9.500 8 13 6 15 4 13 0 9.500 0 5.800A6 6 0 0 1 6 0zm0 3.800a2.200 2.200 0 1 0 0 4.400 2.200 2.200 0 0 0 0-4.400z" /></svg>
                华北-北京四
                <Chevron d="M1 1 5.500 6 10 1" w={11} h={7} />
              </Region>
              <CloudSearch><Magnifier s={17} />搜索云服务、资源(IP / 名称 / ID)、快捷操作...</CloudSearch>
              <CloudNav>{navItems.map((n) => <span key={n}>{n}</span>)}</CloudNav>
              <CloudTools>
                <svg width="18" height="16" viewBox="0 0 18 16" {...stroke(1.2)}><rect x=".6" y=".6" width="16.8" height="14.8" rx="2" /><path d="m5 5 3 2.800L5 10.500M9.500 11H13" /></svg>
                <BellHost><svg width="18" height="18" viewBox="0 0 18 18" {...stroke(1.2)}><path d="M3.300 13V7.500a5.700 5.700 0 0 1 11.400 0V13M1.500 13.700h15M7 14.500a2.100 2.100 0 0 0 4 0M9 .8V2" /></svg><BellDot /></BellHost>
                <HelpIcon s={18} w={1.1} />
                <svg width="18" height="18" viewBox="0 0 18 18" fill="none" stroke="#5a5d66" strokeWidth="1.2"><path d="M3 1.500h12q2 0 2 2v9q0 2-2 2H9l-3 2.500v-2.500H3q-2 0-2-2v-9q0-2 2-2zM9 4.500v1M9 7v4.500" /></svg>
                <Language><Globe s={18} w={1.1} />简体</Language>
              </CloudTools>
              <VLine $h={16} $c="#a5a8b0" />
              <Account>CSDN-The_superstar6</Account>
            </CloudHeader>

            <Body>
              <Content>
                <PageHead>
                  <Crumbs><span>IoTDA实例</span><i>/</i><span>设备管理</span><i>/</i><b>设备详情</b></Crumbs>
                  <TitleRow>
                    <Chevron d="M9 1 2 8.500 9 16" w={10} h={17} sw={1.7} />
                    <b>demo_01</b>
                    <StatusTag>未激活</StatusTag>
                    <HelpMark><HelpIcon s={15} w={1.2} /></HelpMark>
                    <Guide>
                      <svg width="12" height="14" viewBox="0 0 12 14" {...stroke(1.1)}><path d="M1 12V2.500Q1 1 2.500 1H11v9.500H2.500Q1 10.500 1 12q0 1 1.500 1H11v-2.500M5.500 1v4L7 4l1.500 1V1" /></svg>
                      使用指南
                    </Guide>
                  </TitleRow>
                </PageHead>

                <Tabs>{tabs.map((t, i) => <Tab key={t} $on={i === 0}>{t}</Tab>)}</Tabs>

                <Card>
                  {columns.map((col, c) => (
                    <InfoColumn key={c}>
                      {col.map((f, r) => (
                        <InfoRow key={f.label} $tail={r === 1}>
                          <Label>{f.label}</Label>
                          <Value $gap={f.gap}>{f.value}</Value>
                        </InfoRow>
                      ))}
                    </InfoColumn>
                  ))}
                  <RedFrame />
                  <RedNote>设备id</RedNote>
                </Card>

                <Card $grow>
                  <ModelHead>
                    <ModelText>
                      <h3>物模型数据</h3>
                      <p>当产品下定义物模型，设备按照物模型定义呈现上报的属性数据</p>
                      <p>注意：当上报属性名称和产品模型不一致或属性名称中包含特殊字符点(.)、dollar符号($)、空char(十六进制的ASCII码为00)时，会无法正常刷新属性数据。</p>
                    </ModelText>
                    <ModelActions>
                      <OutlineButton>查看全部属性</OutlineButton>
                      <SquareButton><svg width="15" height="15" viewBox="0 0 15 15" {...stroke(1.1)}><path d="M9 13.200A6 6 0 1 1 12.900 10.500" /><path d="M10.800 10.500l2 .8 1.100-1.900z" fill="currentColor" /></svg></SquareButton>
                    </ModelActions>
                  </ModelHead>
                  <ModelBody>
                    <ServicePane>
                      <SearchField $w={326}>请输入服务名称<Magnifier s={14} w={1.1} /></SearchField>
                      <ServiceName>esp15f</ServiceName>
                    </ServicePane>
                    <PropertyPane>
                      <PropertyBar>
                        <span>最新更新时间：&nbsp;--</span>
                        <SearchField $w={260}>请输入属性名称<Magnifier s={14} w={1.1} /></SearchField>
                      </PropertyBar>
                      <PropertyGrid>
                        {properties.map((p) => (
                          <PropertyCard key={p.name} $w={p.w} $pad={p.pad}><b>{p.name}</b>{p.desc}<strong>--</strong></PropertyCard>
                        ))}
                      </PropertyGrid>
                      <Pager>
                        <span>总条数：2</span>
                        <PagerControls>
                          <PageSize>16<Chevron d="M1 1 5.500 5.500 10 1" w={11} h={7} c="#777" /></PageSize>
                          <Chevron d="M6 1 1 6l5 5" w={7} h={12} c="#b5b5b5" sw={1.5} />
                          <PageNumber>1</PageNumber>
                          <Chevron d="m1 1 5 5-5 5" w={7} h={12} c="#b5b5b5" sw={1.5} />
                        </PagerControls>
                      </Pager>
                    </PropertyPane>
                  </ModelBody>
                </Card>
              </Content>

              <HelpRail>
                <RailIcon $mt={0}>
                  <svg width="18" height="22" viewBox="0 0 18 22" fill="none" strokeWidth="3"><defs><linearGradient id="h1" x1="0" y1="0" x2="1" y2="1"><stop offset="0" stopColor="#e0102a" /><stop offset=".5" stopColor="#f03a12" /><stop offset="1" stopColor="#ffb000" /></linearGradient><linearGradient id="h2" x1="1" y1="0" x2="0" y2="1"><stop offset="0" stopColor="#5a18ff" /><stop offset=".5" stopColor="#19a8f0" /><stop offset="1" stopColor="#10e890" /></linearGradient></defs><path d="M16 2.500q0 4-4 6.500L4.500 15Q2 17 2 20h4" stroke="url(#h2)" /><path d="M16 2.500H2q0 4 4 6.500l7 5.500q3 2 3 5.500h-4" stroke="url(#h1)" /></svg>
                </RailIcon>
                <RailIcon $mt={26}><HelpIcon s={22} w={0.9} /></RailIcon>
                <RailIcon $mt={75}>
                  <svg width="20" height="20" viewBox="0 0 20 20" {...stroke(1.2)}><path d="M7.500 3.200 10 .8l2.500 2.400 3.300-.4 1 3.400 2 2.300v3l-2 2.300-1 3.400-3.300-.4L10 19.200l-2.500-2.400-3.300.4-1-3.400-2-2.300v-3l2-2.300 1-3.400z" /><circle cx="10" cy="10" r="3" /></svg>
                </RailIcon>
                <RailIcon $mt={479}>
                  <svg width="22" height="21" viewBox="0 0 22 21" {...stroke(1.2)}><path d="M1 8.500h3v6H1zM18 8.500h3v6h-3zM4 8.500C4 4 7 1 11 1s7 3 7 7.500v6q-1.500 3.500-5 4" /><circle cx="11" cy="18.5" r="1.7" /></svg>
                </RailIcon>
                <RailIcon $mt={33}><Chevron d="m1.500 1.500 6 6-6 6" w={9} h={15} sw={1.6} /></RailIcon>
                <TranslateFloat>
                  <svg width="28" height="28" viewBox="0 0 28 28"><circle cx="14" cy="14" r="14" fill="#f590ab" /><circle cx="18" cy="18" r="9" fill="none" stroke="#a8657a" /><g transform="translate(5 5)"><TranslateGlyph s={18} /></g></svg>
                </TranslateFloat>
                <RobotFloat>
                  <svg width="34" height="34" viewBox="0 0 34 34"><defs><linearGradient id="rb" x1="0" y1="1" x2="1" y2="0"><stop offset="0" stopColor="#1fc0f8" /><stop offset=".35" stopColor="#4ab4f2" /><stop offset=".7" stopColor="#e08bd0" /></linearGradient></defs><circle cx="17" cy="17" r="16" fill="url(#rb)" stroke="#fff" strokeWidth="2" /><circle cx="17" cy="17" r="14" fill="none" stroke="#7ddcf8" /><path d="M3 11.500h14M11 19l-2.500 2.500L11 24" fill="none" stroke="#fff" strokeWidth="1.5" /></svg>
                </RobotFloat>
              </HelpRail>
            </Body>
          </Page>
          <ScrollTrack><ScrollThumb /></ScrollTrack>
        </Panel>
      </Main>

      <Taskbar>
        <Weather>
          <WeatherIcon>
            <svg width="24" height="28" viewBox="0 0 24 28"><path fill="#f5a11b" d="M7 4l4 2 3 7-8 3-6-2 4-3-2-3 4 0z" /><path fill="#8bb8ee" d="M5 26a5 5 0 0 1-1-9.500 7 7 0 0 1 13-2 5.800 5.800 0 0 1 2 11.500z" /><path fill="#b9d6f8" d="M5 22a5 5 0 0 1-1-5.500 7 7 0 0 1 13-2 5 5 0 0 1 5 5z" /></svg>
            <WeatherBadge>6</WeatherBadge>
          </WeatherIcon>
          <div>14°C<br />多云</div>
        </Weather>
        <Apps>{taskApps.map((a, i) => <TaskApp key={i} $on={a.state === 'on'}>{a.icon}<AppMark $state={a.state} /></TaskApp>)}</Apps>
        <Clock>20:53<br />2025/10/26</Clock>
      </Taskbar>
    </Window>
  );
}
